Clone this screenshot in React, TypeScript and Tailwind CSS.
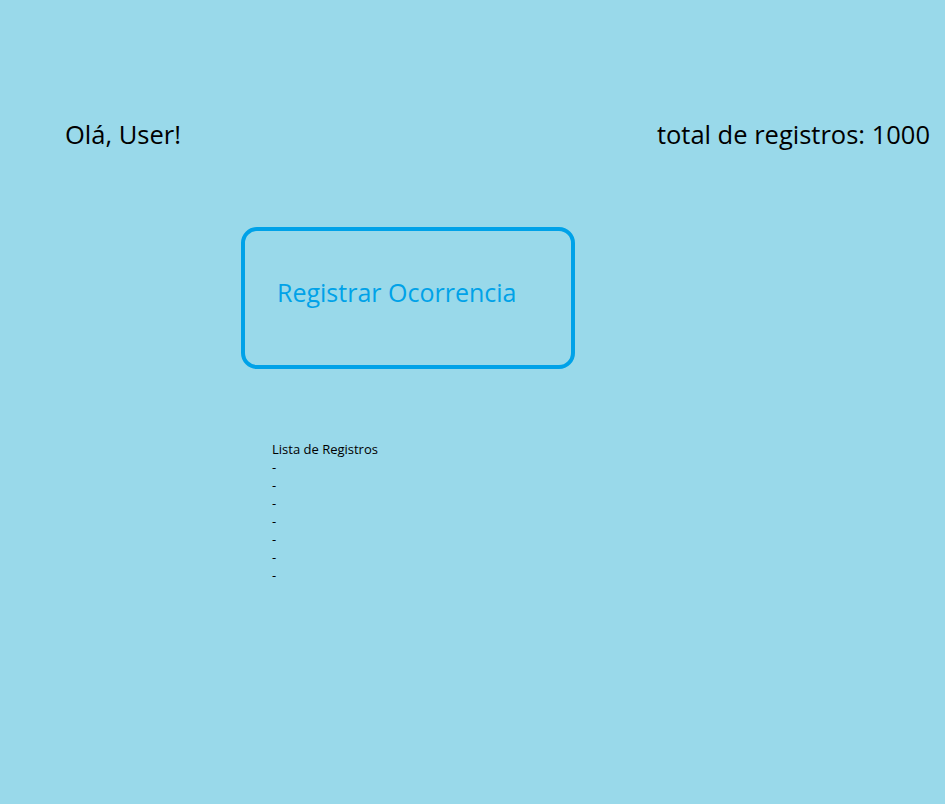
export default function App() {
  const rows = [1, 2, 3, 4, 5, 6, 7];
  return (
    <div className="min-h-screen w-full bg-[#99d9ea] text-black" style={{ fontFamily: '"Open Sans", "Noto Sans", sans-serif' }}>
      <header className="flex items-center justify-between pl-[65px] pr-[15px] pt-[116px]">
        <p className="text-[25.5px] leading-[36px]">Olá, User!</p>
        <p className="text-[25.5px] leading-[36px]">total de registros: 1000</p>
      </header>
      <div className="ml-[241px] mt-[75px] flex h-[142px] w-[334px] items-center rounded-[16px] border-4 border-[#00a2e8] pb-[13px] pl-[32px]">
        <span className="text-[25px] leading-[36px] text-[#00a2e8]">Registrar Ocorrencia</span>
      </div>
      <div className="ml-[272px] mt-[71px] text-[13px] leading-[18px]">
        <p>Lista de Registros</p>
        {rows.map((r) => (
          <p key={r}>-</p>
        ))}
      </div>
    </div>
  );
}
